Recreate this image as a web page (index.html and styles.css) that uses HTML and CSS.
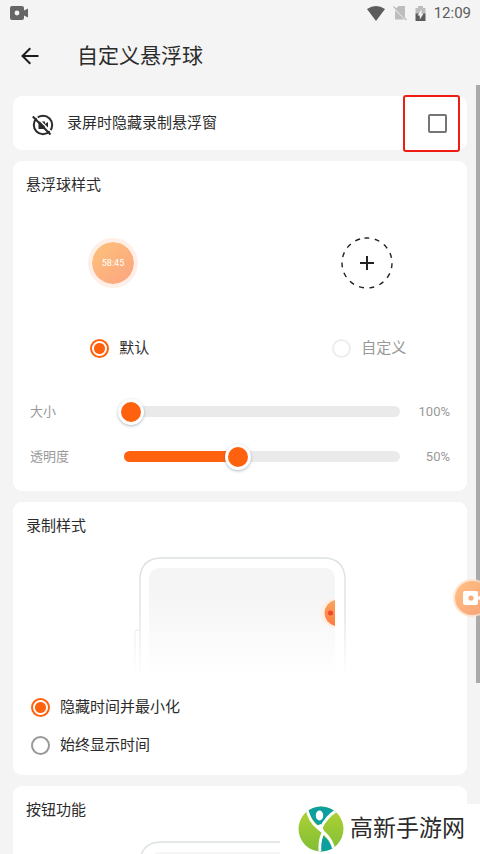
FILE: index.html
```html
<!DOCTYPE html>
<html lang="zh-CN">
<head>
<meta charset="utf-8">
<meta name="viewport" content="width=device-width, initial-scale=1">
<title>自定义悬浮球</title>
<link rel="stylesheet" href="styles.css">
</head>
<body>
<div class="app">
  <div class="status">
    <svg width="18" height="14" viewBox="0 0 18 14" aria-hidden="true">
      <path fill="#666" fill-rule="evenodd" d="M2 0h10q2 0 2 2v2.500l4-2v9l-4-2v2.500q0 2-2 2H2q-2 0-2-2V2Q0 0 2 0zM7 4.600a2.400 2.400 0 1 0 0 4.800a2.400 2.400 0 1 0 0-4.800z"/>
    </svg>
    <div class="status-right">
      <svg width="18" height="15" viewBox="0 0 18 15" aria-hidden="true"><path fill="#5c5c5c" d="M0 3Q9-3 18 3L9 15z"/></svg>
      <svg width="14" height="16" viewBox="0 0 14 16" aria-hidden="true">
        <path fill="#bdbdbd" d="M5.500 1H12v12L2.500 3.800z"/><path fill="#bdbdbd" d="M2 5.200L11.500 14.500H2z"/>
        <path stroke="#bdbdbd" stroke-width="1.200" d="M.5 1.500L13.500 15"/>
      </svg>
      <svg width="11" height="15" viewBox="0 0 11 15" aria-hidden="true">
        <path fill="#bdbdbd" d="M3 0h5v2h2.500v6H.500V2H3z"/><path fill="#5c5c5c" d="M.500 7.500h10V15H.500z"/>
        <path fill="#f4f4f4" d="M6.500 3.500L2.500 9.500h2.300v4L8.600 7.500H6.500z"/>
      </svg>
      <span class="clock">12:09</span>
    </div>
  </div>

  <header class="header">
    <button class="back" type="button" aria-label="返回">
      <svg width="18" height="18" viewBox="0 0 18 18" fill="none" stroke="#1c1c1c" stroke-width="2"><path d="M17.500 9H2M9.300 1.200L1.500 9l7.800 7.800"/></svg>
    </button>
    <h1>自定义悬浮球</h1>
  </header>

  <main class="cards">
    <section class="card hide-row">
      <svg width="22" height="26" viewBox="0 -4 22 26" aria-hidden="true">
        <circle cx="11" cy="11" r="9.200" fill="none" stroke="#2b2b2b" stroke-width="2"/>
        <path fill="#2b2b2b" d="M6.500 7.500h6.500v2.500l3-2v6.500l-3-2V15H6.500z"/>
        <path stroke="#fff" stroke-width="1.500" d="M3.500 2.200L20.500 19"/>
        <path stroke="#2b2b2b" stroke-width="2" d="M.8 2.500L18.500 20.500"/>
      </svg>
      <label for="hide">录屏时隐藏录制悬浮窗</label>
      <span class="highlight"><input class="check" id="hide" type="checkbox"></span>
    </section>

    <section class="card ball-card">
      <h2>悬浮球样式</h2>
      <div class="previews">
        <div class="preview"><span class="ball">58:45</span></div>
        <div class="preview">
          <button class="add" type="button" aria-label="添加自定义样式">
            <svg width="52" height="52" viewBox="0 0 52 52" fill="none" stroke="#222">
              <circle cx="26" cy="26" r="25" stroke-width="1.400" stroke-dasharray="5 5.470" transform="rotate(-96 26 26)"/>
              <path stroke-width="2" d="M26 19v14M19 26h14"/>
            </svg>
          </button>
        </div>
      </div>
      <div class="previews choices">
        <label class="choice"><input class="radio" type="radio" name="ball" checked>默认</label>
        <label class="choice muted"><input class="radio" type="radio" name="ball" disabled>自定义</label>
      </div>
      <div class="slide-row">
        <label for="size">大小</label>
        <div class="slider"><span class="track track-size"></span><input id="size" type="range" min="0" max="100" value="0"></div>
        <output for="size">100%</output>
      </div>
      <div class="slide-row">
        <label for="alpha">透明度</label>
        <div class="slider"><span class="track track-alpha"></span><input id="alpha" type="range" min="0" max="100" value="41"></div>
        <output for="alpha">50%</output>
      </div>
    </section>

    <section class="card record-card">
      <h2>录制样式</h2>
      <svg class="phone" width="212" height="120" viewBox="0 0 212 120" fill="none" aria-hidden="true">
        <defs>
          <linearGradient id="edge" x1="0" y1="0" x2="0" y2="120" gradientUnits="userSpaceOnUse"><stop offset="0" stop-color="#dce1e3"/><stop offset=".5" stop-color="#e2e6e8"/><stop offset="1" stop-color="#fff"/></linearGradient>
          <linearGradient id="screen" x1="0" y1="0" x2="0" y2="120" gradientUnits="userSpaceOnUse"><stop offset=".3" stop-color="#f5f5f5"/><stop offset="1" stop-color="#fff"/></linearGradient>
          <linearGradient id="dot" x1="0" y1="0" x2="0" y2="1"><stop offset="0" stop-color="#f9a65c"/><stop offset="1" stop-color="#ff7a3d"/></linearGradient>
        </defs>
        <path stroke="url(#edge)" stroke-width="1.500" d="M6 120V23Q6 1 28 1H189Q211 1 211 23V120"/>
        <path stroke="url(#edge)" d="M6 73H4Q1 73 1 76V120"/>
        <path fill="url(#screen)" d="M15 120V23Q15 11 27 11H189Q201 11 201 23V120z"/>
        <path fill="#ffeee4" d="M201 41.500a14.500 14.500 0 0 0 0 29z"/>
        <path fill="url(#dot)" d="M201 43a13.300 13.300 0 0 0 0 26z"/>
        <circle cx="196.500" cy="56" r="2.500" fill="#f4432f"/>
      </svg>
      <label class="choice"><input class="radio" type="radio" name="record" checked>隐藏时间并最小化</label>
      <label class="choice"><input class="radio" type="radio" name="record">始终显示时间</label>
    </section>

    <section class="card button-card">
      <h2>按钮功能</h2>
      <svg class="phone" width="212" height="120" viewBox="0 0 212 120" fill="none" aria-hidden="true">
        <path stroke="url(#edge)" stroke-width="1.500" d="M6 120V23Q6 1 28 1H189Q211 1 211 23V120"/>
        <path fill="url(#screen)" d="M15 120V23Q15 11 27 11H189Q201 11 201 23V120z"/>
      </svg>
    </section>
  </main>

  <div class="scrollbar"></div>
  <button class="float" type="button" aria-label="录制">
    <svg width="38" height="38" viewBox="0 0 38 38" aria-hidden="true">
      <defs><linearGradient id="fl" x1="0" y1="0" x2="1" y2="1"><stop offset="0" stop-color="#ffc285"/><stop offset="1" stop-color="#f8a076"/></linearGradient></defs>
      <circle cx="19" cy="19" r="19" fill="#ffe0c9" opacity=".8"/><circle cx="19" cy="19" r="17" fill="url(#fl)"/>
      <rect x="10" y="12" width="15" height="14" rx="2" fill="#fff"/><path fill="#fff" d="M25 18l5-3v8l-5-3z"/><circle cx="18" cy="19" r="2.600" fill="#fbab75"/>
    </svg>
  </button>

  <div class="brand">
    <svg width="46" height="46" viewBox="0 0 46 46" aria-hidden="true">
      <defs>
        <linearGradient id="lime" x1="0" y1="0" x2="0" y2="1"><stop offset="0" stop-color="#b4d334"/><stop offset="1" stop-color="#7fbe35"/></linearGradient>
        <clipPath id="disc"><circle cx="23" cy="23" r="22.500"/></clipPath>
      </defs>
      <g clip-path="url(#disc)">
        <path fill="url(#lime)" d="M0 0h46v46H0z"/>
        <path fill="#0c9f9e" d="M9 0h30v5Q29 11 23 21Q13 15 10 4z"/>
        <path fill="#0c9f9e" d="M25 30Q34 36 36 46H22Q22 38 25 30z"/>
        <path fill="none" stroke="#fff" stroke-width="2.800" d="M9 3Q11 15 20 22Q35 32 36 46M39 4Q28 11 23 22"/>
        <path fill="none" stroke="#fff" stroke-width="2.800" d="M25 27Q21 35 22 46"/>
        <path fill="#fff" d="M18 20l5-2 4 9-1 2z"/>
        <ellipse cx="21.500" cy="9.500" rx="3.700" ry="5" fill="#fff"/>
      </g>
    </svg>
    <span>高新手游网</span>
  </div>
</div>
</body>
</html>
```
FILE: styles.css
```css
* { box-sizing: border-box; }

body {
  margin: 0;
  background: #f4f4f4;
  color: #2b2b2b;
  font: 15px/22px Roboto, "Noto Sans CJK SC", sans-serif;
}

h1, h2 { margin: 0; font-weight: 400; }

button { padding: 0; border: 0; background: none; }
svg { display: block; flex: none; }

.app {
  position: relative;
  height: 100vh;
  overflow: hidden;
}

.status {
  display: flex;
  justify-content: space-between;
  align-items: center;
  height: 26px;
  padding: 0 9px 0 10px;
}

.status-right { display: flex; align-items: center; gap: 8px; }
.clock { color: #5c5c5c; font-size: 15px; line-height: 26px; }

.header {
  display: flex;
  align-items: center;
  gap: 38px;
  height: 60px;
  padding: 0 21px;
}

.header h1 { font-size: 21px; line-height: 32px; }

.cards {
  display: flex;
  flex-direction: column;
  gap: 11px;
  padding: 10px 13px 0;
}

.card {
  border-radius: 9px;
  background: #fff;
}

.card h2 { padding: 12px 13px 0; font-size: 15px; line-height: 24px; }

.hide-row {
  display: flex;
  align-items: center;
  height: 54px;
  padding: 0 7px 0 19px;
  gap: 13px;
}

.hide-row label { flex: 1; line-height: 24px; }

.highlight {
  display: grid;
  place-items: center;
  width: 57px;
  height: 57px;
  padding-left: 11px;
  border: 2px solid #ee1c12;
  border-radius: 3px;
}

.check {
  appearance: none;
  width: 19px;
  height: 19px;
  margin: 0;
  border: 2px solid #757575;
  border-radius: 2px;
}

.ball-card { padding-bottom: 12px; }

.previews {
  display: grid;
  grid-template-columns: 1fr 1fr;
  margin: 0 -27px;
}

.preview {
  display: grid;
  place-items: center;
  height: 132px;
}

.ball {
  display: grid;
  place-items: center;
  width: 50px;
  height: 50px;
  border: 4px solid #ffefe8;
  border-radius: 50%;
  background: linear-gradient(135deg, #fdc27a, #fca481) padding-box;
  color: #fff;
  font-size: 9px;
}

.choices { justify-items: center; padding-left: 9px; }

.choice {
  display: flex;
  align-items: center;
  gap: 10px;
  height: 38px;
}

.muted { color: #999; }

.radio {
  appearance: none;
  width: 19px;
  height: 19px;
  margin: 0;
  border: 2px solid #999;
  border-radius: 50%;
}

.radio:checked {
  border-color: #ff620e;
  background: radial-gradient(circle, #ff620e 5px, #fff 6px);
}

.radio:disabled { border-color: #eee; }

.slide-row {
  display: grid;
  grid-template-columns: 88px 1fr 44px;
  align-items: center;
  height: 45px;
  padding: 0 17px;
  color: #999;
  font-size: 13px;
}

.choices + .slide-row { margin-top: 22px; }
.slide-row output { text-align: right; }

.slider { display: grid; align-items: center; }
.slider > * { grid-area: 1 / 1; }

.track {
  height: 11px;
  margin: 0 6px;
  border-radius: 6px;
  background: #eaeaea;
}

.track-alpha { background: linear-gradient(to right, #ff620e 41%, #eaeaea 41%); }

.slider input {
  appearance: none;
  width: 100%;
  height: 26px;
  margin: 0;
  background: none;
}

.slider input::-webkit-slider-thumb {
  appearance: none;
  width: 26px;
  height: 26px;
  border: 3px solid #fff;
  border-radius: 50%;
  background: #ff620e;
  box-shadow: 0 1px 3px rgba(60, 80, 100, .4);
}

.record-card { padding-bottom: 11px; }
.record-card .choice { padding-left: 18px; }

.phone { margin: 19px auto 0; }
.record-card .phone { margin-bottom: 11px; }

.scrollbar {
  position: absolute;
  top: 85px;
  right: 0;
  width: 4px;
  height: 70%;
  background: #aaa;
}

.float {
  position: absolute;
  top: 579px;
  right: -11px;
}

.brand {
  position: absolute;
  right: 0;
  bottom: 0;
  display: flex;
  align-items: center;
  gap: 6px;
  height: 50px;
  padding: 0 15px 0 18px;
  background: #fff;
  font-size: 23px;
  line-height: 36px;
}
```
